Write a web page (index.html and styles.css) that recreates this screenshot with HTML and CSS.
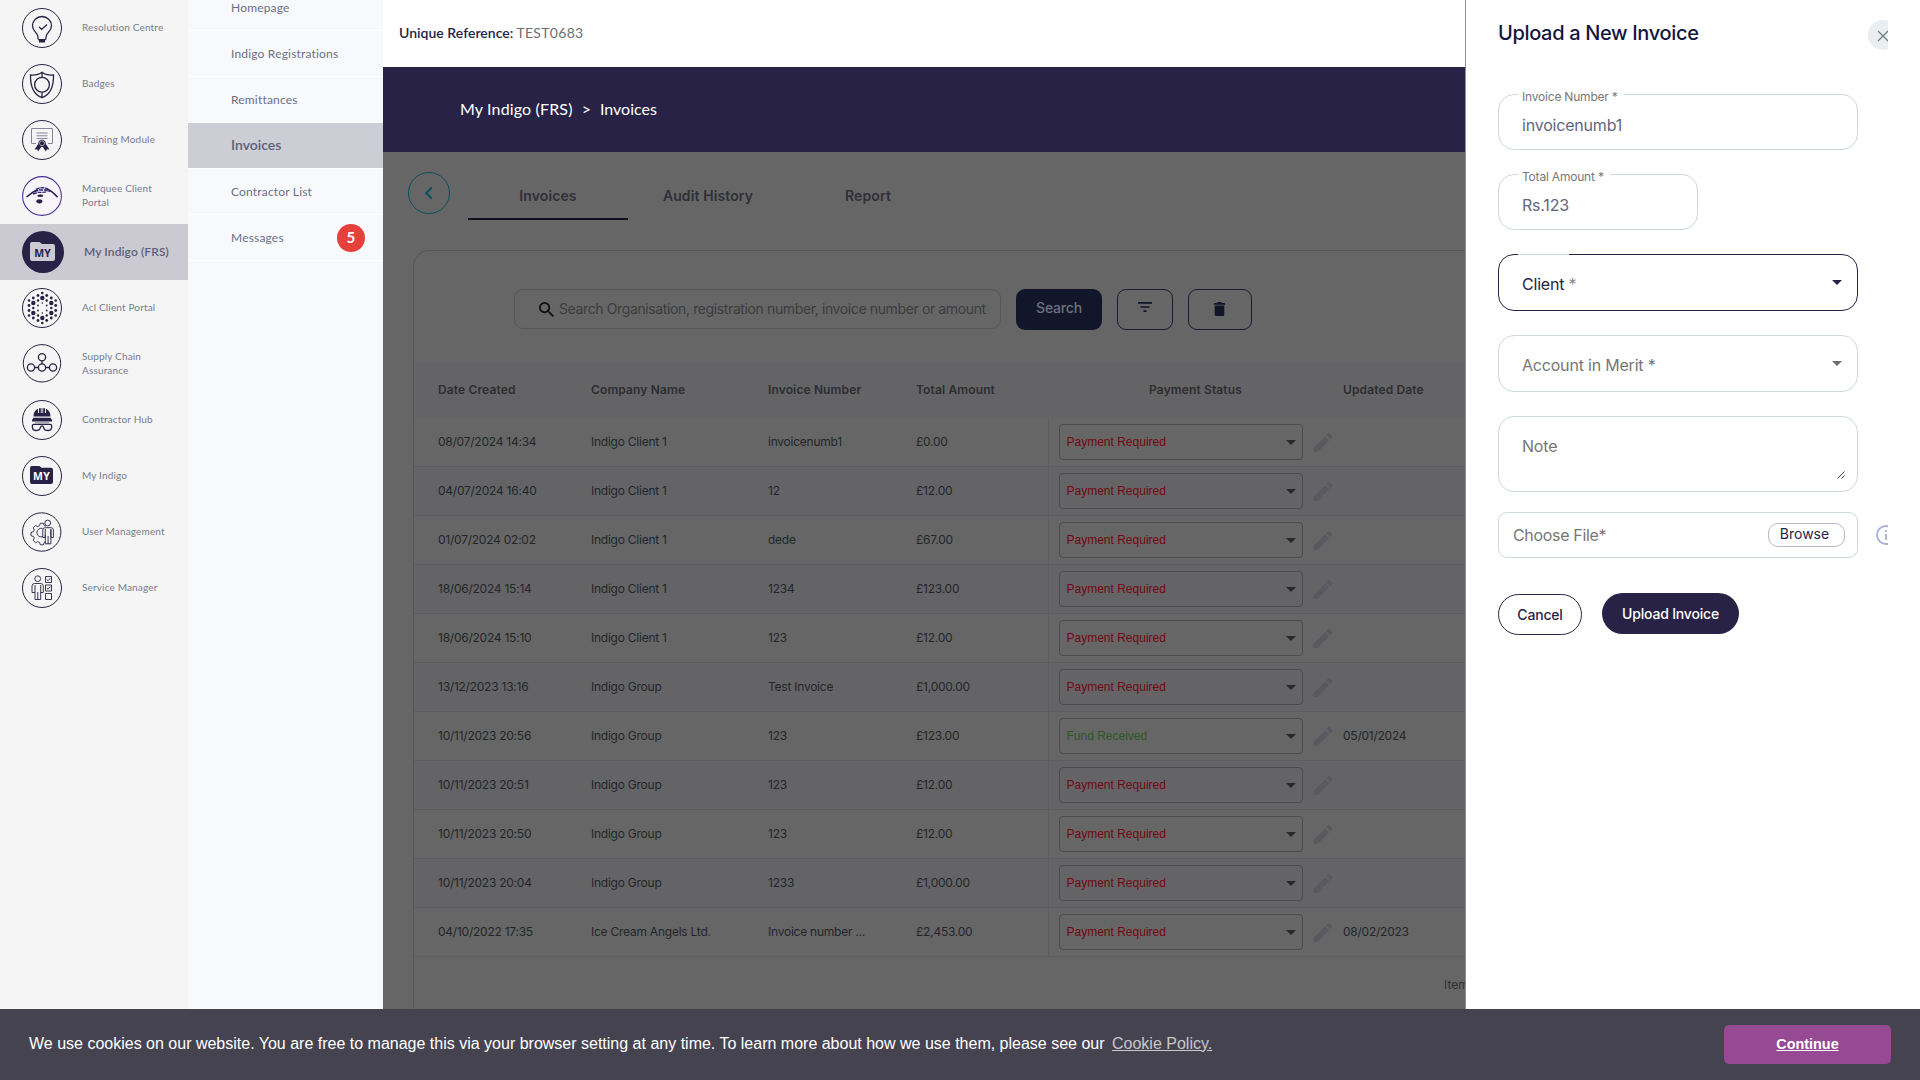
FILE: index.html
```html
<!DOCTYPE html>
<html lang="en">
<head>
<meta charset="utf-8">
<title>Invoices</title>
<link rel="stylesheet" href="styles.css">
</head>
<body>
<div class="app">
  <nav class="modules">
    <a class="module"><svg class="icon" viewBox="0 0 40 40"><circle class="ring" cx="20" cy="20" r="19.5"/><path class="line" d="M16.3 31.500l-.6-3.500C15 24.500 10.500 22.800 10.500 17.700a9.500 9.200 0 0 1 19 0C29.500 22.800 25 24.500 24.300 28l-.6 3.500M17 18.800l2.600 2.600 5.400-4.800"/><path class="solid" d="M16 31h8l-1 2v1.600h-6V33z"/></svg><span>Resolution Centre</span></a>
    <a class="module"><svg class="icon" viewBox="0 0 40 40"><circle class="ring" cx="20" cy="20" r="19.500"/><path class="line" d="M20 8.300c-3 2.400-7 3-11.500 2.700C8.300 22 11 30.500 20 33.700 29 30.500 31.700 22 31.500 11 27 11.300 23 10.700 20 8.300zM20 8v5M20 28.500V34"/><circle class="line" cx="20" cy="20.700" r="7.400"/></svg><span>Badges</span></a>
    <a class="module"><svg class="icon" viewBox="0 0 40 40"><circle class="ring" cx="20" cy="20" r="19.500"/><path class="faint" d="M14 23.500H9.500v-15h21v15H26M14.500 13h11M14.500 15.800h11M14.500 18.500h11"/><path class="solid" d="M16.500 23.500l-4 6 2.700-.2L16 31.500l4-5.500 4 5.500.8-2.200 2.700.2-4-6z"/><circle class="solid" cx="20" cy="23.300" r="3.600"/><circle cx="20" cy="23.300" r="2.500" fill="none" stroke="#f5f5f5" stroke-width=".6"/></svg><span>Training Module</span></a>
    <a class="module"><svg class="icon" viewBox="0 0 40 40"><circle cx="20" cy="20" r="19.400" fill="#f7f5fa" stroke="#4a3295" stroke-width="1.100"/><path d="M4.500 21C9 17.300 12 15.300 15.500 13.500M24.500 12.800c4 1.500 7.300 4.200 11 8.500" fill="none" stroke="#2a2350" stroke-width="1.500"/><path d="M14 13.500l4-1.800h5l3 1.800M12.500 15.700l5-1.700h6l4.500 1.500M11 18l5-1.600h5l4-.6" fill="none" stroke="#352a78" stroke-width="1.400" stroke-dasharray="4 .8"/><ellipse class="solid" cx="18.300" cy="19.700" rx="3" ry="1.300"/><ellipse class="solid" cx="17.400" cy="25.300" rx="3" ry="2.100"/></svg><span>Marquee Client<br>Portal</span></a>
    <a class="module module--active"><svg class="icon" viewBox="0 0 42 42"><circle class="solid" cx="21" cy="21" r="21"/><path d="M10 11h7.500l2.500 2h11q2 0 2 2v13q0 2-2 2H10q-2 0-2-2V13q0-2 2-2z" fill="#cbc9d1"/><text x="20.700" y="25.800" class="my" fill="#282346">MY</text></svg><span>My Indigo (FRS)</span></a>
    <a class="module"><svg class="icon" viewBox="0 0 40 40"><circle class="ring" cx="20" cy="20" r="19.500"/><g class="solid"><circle cx="20.300" cy="10" r="2.200"/><circle cx="29.300" cy="15" r="2.200"/><circle cx="29.300" cy="25" r="2.200"/><circle cx="20.300" cy="30" r="2.200"/><circle cx="11.300" cy="25" r="2.200"/><circle cx="11.300" cy="15" r="2.200"/><circle cx="20.300" cy="5" r="1.300"/><circle cx="20.300" cy="35" r="1.300"/><circle cx="16" cy="7.500" r="1.400"/><circle cx="24.700" cy="7.500" r="1.400"/><circle cx="11.300" cy="10" r="1.400"/><circle cx="29.300" cy="10" r="1.400"/><circle cx="7" cy="12.500" r="1.300"/><circle cx="33.700" cy="12.500" r="1.300"/><circle cx="7" cy="17.500" r="1.400"/><circle cx="33.700" cy="17.500" r="1.400"/><circle cx="7" cy="22.500" r="1.400"/><circle cx="33.700" cy="22.500" r="1.400"/><circle cx="7" cy="27.500" r="1.300"/><circle cx="33.700" cy="27.500" r="1.300"/><circle cx="11.300" cy="30" r="1.400"/><circle cx="29.300" cy="30" r="1.400"/><circle cx="16" cy="32.500" r="1.400"/><circle cx="24.700" cy="32.500" r="1.400"/><circle cx="16" cy="12.500" r="1.200"/><circle cx="24.700" cy="12.500" r="1.200"/><circle cx="16" cy="27.500" r="1.200"/><circle cx="24.700" cy="27.500" r="1.200"/><circle cx="11.300" cy="20" r="1.200"/><circle cx="29.300" cy="20" r="1.200"/><circle cx="16" cy="17.500" r=".9"/><circle cx="24.700" cy="17.500" r=".9"/><circle cx="16" cy="22.500" r=".9"/><circle cx="24.700" cy="22.500" r=".9"/><circle cx="20.300" cy="15" r=".8"/><circle cx="20.300" cy="25" r=".8"/></g></svg><span>Acl Client Portal</span></a>
    <a class="module"><svg class="icon" viewBox="0 0 40 40"><circle class="ring" cx="20" cy="19.300" r="18.700"/><g class="line"><circle cx="20" cy="13.300" r="3.600"/><circle cx="20" cy="23.500" r="3.600"/><circle cx="9" cy="23.500" r="3.600"/><circle cx="31" cy="23.500" r="3.600"/><path d="M20 17v3M12.600 23.500h3.800M23.600 23.500h3.800"/></g></svg><span>Supply Chain<br>Assurance</span></a>
    <a class="module"><svg class="icon" viewBox="0 0 40 40"><circle class="ring" cx="20" cy="20" r="19.500"/><path class="solid" d="M11.500 16.500C11.500 12 14 9.500 16 9v4h1V8.200h1.800V13h.8V8h.8v5h.8V8.200H23V13h1V9c2 .5 4.500 3 4.500 7.500zM11.500 17.700h17l1.500 2.300v1.500H10V20z"/><path class="faint" d="M13 22.800h14"/><path class="line" d="M12 24.300h16c1.500 0 1.800 1 1.600 3.200-.2 2-1.300 3-3 3-3.600 0-4.300-.5-5.200-3.500-.4-1.400-2.400-1.400-2.800 0-.9 3-1.600 3.500-5.200 3.500-1.700 0-2.800-1-3-3-.2-2.200.1-3.200 1.600-3.200z"/></svg><span>Contractor Hub</span></a>
    <a class="module"><svg class="icon" viewBox="0 0 40 40"><circle class="ring" cx="20" cy="20" r="19.500"/><path class="solid" d="M10 10h7.500l2 1.800H29q2 0 2 2V26q0 2-2 2H10q-2 0-2-2V12q0-2 2-2z"/><text x="19.500" y="24" class="my" fill="#fff">MY</text></svg><span>My Indigo</span></a>
    <a class="module"><svg class="icon" viewBox="0 0 40 40"><circle class="ring" cx="19.700" cy="20" r="19.200"/><g class="line thin"><path d="M24 14.200l-1.800-.6-.7-2.300h-3.200l-.8 2.400-1.800.9-2.200-1.100-2.300 2.300 1.100 2.200-.8 1.700-2.500.8v3.200l2.500.8.8 1.700-1.100 2.200 2.300 2.300 2.200-1.100 1.800.8.8 2.400h3.200l.7-2.400 1.300-.6"/><path d="M20.500 16.500a4.300 4.300 0 1 0 .5 8"/><circle cx="25.700" cy="11" r="2.900"/><path d="M23.300 31.800V17M23.300 22.500v3h-2.500V18q0-2.300 2.300-2.300h6q2.300 0 2.300 2.300v7.500h-2.500V17.500M28.900 17v14.800h-5.600M26.100 24v8"/></g></svg><span>User Management</span></a>
    <a class="module"><svg class="icon" viewBox="0 0 40 40"><circle class="ring" cx="20" cy="20" r="19.500"/><g class="line thin"><circle cx="15.700" cy="10.700" r="2.900"/><path d="M13 31.500V17M13 24.500h-3V18q0-2.500 2.500-2.500h6.300q2.500 0 2.500 2.500v6.500h-2.600M18.700 17v14.500H13M15.800 24v7.500"/><path d="M23.500 8.500h6v6h-6zM23.500 17h6v6h-6zM23.500 25.500h6v6h-6zM24.800 11.500l1.300 1.200 2.300-2.500M24.800 20l1.300 1.200 2.300-2.500"/></g></svg><span>Service Manager</span></a>
  </nav>
  <nav class="submenu">
    <a class="sub">Homepage</a>
    <a class="sub">Indigo Registrations</a>
    <a class="sub">Remittances</a>
    <a class="sub sub--active">Invoices</a>
    <a class="sub">Contractor List</a>
    <a class="sub">Messages<span class="count">5</span></a>
  </nav>
  <main class="main">
    <div class="reference"><b>Unique Reference:</b><span>TEST0683</span></div>
    <div class="crumbs"><span>My Indigo (FRS)</span><span class="sep">&gt;</span><span class="here">Invoices</span></div>
    <div class="content">
      <div class="tabs">
        <button class="back"><svg viewBox="0 0 12 14"><path d="M8.800 1.500L3.200 7l5.600 5.500"/></svg></button>
        <a class="tab tab--active">Invoices</a><a class="tab">Audit History</a><a class="tab">Report</a>
      </div>
      <section class="card">
        <div class="search">
          <div class="search-box"><svg viewBox="3 3 17.500 17.500"><path d="M15.500 14h-.79l-.28-.27A6.471 6.471 0 0 0 16 9.500 6.500 6.500 0 1 0 9.500 16c1.610 0 3.090-.59 4.230-1.570l.27.28v.79l5 4.990L20.490 19l-4.990-5zm-6 0C7.010 14 5 11.990 5 9.500S7.010 5 9.500 5 14 7.010 14 9.500 11.990 14 9.500 14z"/></svg><span>Search Organisation, registration number, invoice number or amount</span></div>
          <button class="go">Search</button>
          <button class="tool tool--filter"><svg width="14" height="10" viewBox="0 0 14 10"><path d="M0 0h14v1.700H0zM2.500 4.200h9v1.600h-9zM5.500 8.300h3V10h-3z"/></svg></button>
          <button class="tool tool--trash"><svg width="11" height="14" viewBox="0 0 11 14"><path d="M.7 3.600h9.600V12.500q0 1.500-1.500 1.500H2.200Q.7 14 .7 12.500zM0 1h3l.8-1h3.400L8 1h3v1.700H0z"/></svg></button>
        </div>
        <div class="row row--head"><span>Date Created</span><span>Company Name</span><span>Invoice Number</span><span>Total Amount</span><span class="center">Payment Status</span><span>Updated Date</span></div>
        <div id="rows"></div>
        <div class="pager">Items per page:</div>
      </section>
    </div>
  </main>
  <aside class="drawer">
    <header class="drawer-head"><h2>Upload a New Invoice</h2><button class="close"><svg viewBox="0 0 10 10"><path d="M0 0l10 10M10 0L0 10"/></svg></button></header>
    <div class="field"><label class="float">Invoice Number *</label><span class="value">invoicenumb1</span></div>
    <div class="field field--short"><label class="float">Total Amount *</label><span class="value">Rs.123</span></div>
    <div class="field field--focus"><i class="notch"></i><span>Client <em>*</em></span><i class="arrow"></i></div>
    <div class="field field--select"><span>Account in Merit *</span><i class="arrow"></i></div>
    <div class="field field--note"><span>Note</span><svg class="grip" viewBox="0 0 8 8"><path d="M.5 7.500l7-7M4.500 7.500l3-3"/></svg></div>
    <div class="file-row">
      <div class="file"><span>Choose File*</span><button class="browse">Browse</button></div>
      <svg class="info" viewBox="0 0 20 20"><circle cx="10" cy="10" r="9"/><path d="M10 9v6M10 5v2"/></svg>
    </div>
    <div class="actions"><button class="cancel">Cancel</button><button class="upload">Upload Invoice</button></div>
  </aside>
</div>
<footer class="cookies"><p>We use cookies on our website. You are free to manage this via your browser setting at any time. To learn more about how we use them, please see our <a>Cookie Policy.</a></p><button class="continue">Continue</button></footer>
<script src="rows.js"></script>
</body>
</html>
```
FILE: styles.css
```css
* { box-sizing: border-box; }
body { margin: 0; width: 1920px; height: 1080px; overflow: hidden; background: #fff; font-family: "Inter", sans-serif; }
button { font: inherit; padding: 0; background: none; border: 0; }
.app { display: flex; height: 1009px; overflow: hidden; }

.modules { width: 188px; flex: none; background: #f5f5f5; font: 10px/14px "Lato", sans-serif; letter-spacing: .16px; color: #777b90; }
.module { display: flex; align-items: center; gap: 20px; height: 56px; padding-left: 22px; }
.module span { padding-bottom: 2px; }
.icon { width: 40px; height: 40px; flex: none; }
.module--active { background: #cbc9d1; font-size: 12px; font-weight: 600; color: #5d5f78; letter-spacing: .1px; }
.module--active span { padding-bottom: 0; }
.module--active .icon { width: 42px; height: 42px; }
.ring { fill: none; stroke: #282346; stroke-width: 1; }
.line { fill: none; stroke: #282346; stroke-width: 1.3; }
.thin { stroke-width: .9; }
.faint { fill: none; stroke: #86839b; stroke-width: 1; }
.solid { fill: #282346; }
.my { font: 700 10.500px "Open Sans", sans-serif; text-anchor: middle; }

.submenu { width: 195px; flex: none; background: #f8f9fc; font: 12px/16px "Lato", sans-serif; letter-spacing: .18px; color: #6b6f86; }
.sub { display: flex; align-items: center; height: 46px; padding-left: 43px; border-bottom: 1px solid #fff; }
.sub:first-child { margin-top: -15px; }
.sub--active { background: #cdcdd6; padding-bottom: 2px; font-size: 14px; font-weight: 600; letter-spacing: 0; color: #5d5f78; }
.count { width: 28px; height: 28px; margin: 0 18px 0 auto; border-radius: 50%; background: #e5403c; color: #fff; font: 700 15px/26px "Lato", sans-serif; text-align: center; }

.main { width: 1082px; flex: none; overflow: hidden; }
.reference { display: flex; gap: 3px; height: 67px; padding-left: 16px; font: 14px/66px "Lato", sans-serif; color: #6d6d72; letter-spacing: .3px; }
.reference b { font-weight: 600; color: #282346; letter-spacing: .03px; }
.crumbs { display: flex; height: 85px; padding-left: 77px; background: #282346; color: #fff; font: 16px/84px "Lato", sans-serif; }
.crumbs span:first-child { letter-spacing: .15px; }
.sep { margin: 0 9px; }
.content { height: 857px; background: #666; }

.tabs { display: flex; height: 68px; padding-left: 25px; }
.back { width: 42px; height: 42px; margin: 20px 18px 0 0; border: 1px solid #08515c; border-radius: 50%; display: grid; place-items: center; }
.back svg { width: 12px; height: 14px; fill: none; stroke: #08515c; stroke-width: 2; }
.tab { width: 160px; height: 68px; padding-top: 1px; font-size: 14px; font-weight: 600; line-height: 86px; text-align: center; letter-spacing: .11px; color: #302f38; }
.tab--active { border-bottom: 2px solid #100e1f; }

.card { width: 1400px; height: 900px; margin: 30px 0 0 30px; border: 1px solid #555759; border-radius: 16px; }
.search { display: flex; height: 111px; padding: 38px 0 0 100px; align-items: flex-start; }
.search-box { display: flex; align-items: center; width: 487px; height: 40px; padding: 0 9px 0 24px; gap: 5px; border: 1px solid #555759; border-radius: 9px; color: #3c3c3e; font-size: 14px; letter-spacing: -.38px; white-space: nowrap; }
.search-box svg { width: 15px; height: 15px; flex: none; fill: #0d0d10; }
.search-box span { width: 432px; flex: none; overflow: hidden; line-height: 22px; }
.go { width: 86px; height: 41px; margin-left: 15px; border-radius: 9px; background: #12162a; color: #6f727c; font-size: 14px; font-weight: 500; letter-spacing: -.2px; line-height: 37px; padding-bottom: 4px; }
.tool { display: grid; place-items: center; height: 41px; border: 1px solid #1b1933; border-radius: 9px; padding-bottom: 6px; }
.tool svg { fill: #12152a; }
.tool--filter { width: 56px; margin-left: 15px; }
.tool--trash { width: 64px; margin-left: 15px; padding: 0 2px 1px 0; }

.row { display: grid; grid-template-columns: 153px 177px 148px 132px 295px 150px; height: 49px; padding-left: 24px; align-items: center; border-bottom: 1px solid #5c5d5f; font-size: 12px; letter-spacing: -.24px; color: #232629; }
.row > span { padding-bottom: 2px; }
.row:nth-child(even) { background: #646467; }
.row--head { height: 56px; background: #606062; border: 0; font-weight: 600; letter-spacing: .13px; color: #2d2d2f; }
.center { text-align: center; }
.status { display: flex; align-items: center; gap: 10px; height: 48px; padding-left: 10px; border-left: 1px solid #5c5d5f; }
.select { display: flex; align-items: center; justify-content: space-between; width: 244px; height: 36px; padding: 0 6px 0 6.5px; border: 1px solid #4b4c4d; border-radius: 4px; font: 12px "Liberation Sans", sans-serif; letter-spacing: 0; color: #730812; }
.select--received { color: #2d5720; }
.arrow { width: 0; height: 0; border: 5px solid transparent; border-top-color: #27282a; border-bottom: 0; }
.pencil { width: 20px; height: 20px; fill: #59595f; }
.pager { padding: 20px 0 0 1030px; font-size: 12px; line-height: 16px; color: #303033; white-space: nowrap; }

.drawer { flex: none; width: 423px; padding-left: 32px; border-left: 1px solid #87939b; background: #fff; overflow: hidden; color: #777; font-size: 16px; letter-spacing: -.2px; }
.drawer-head { display: flex; justify-content: space-between; height: 94px; width: 400px; }
h2 { margin: 0; font-size: 20px; font-weight: 500; line-height: 67px; letter-spacing: -.34px; color: #14163f; }
.close { width: 30px; height: 30px; margin-top: 20px; border-radius: 50%; background: #eaeef0; display: grid; place-items: center; }
.close svg { width: 10px; height: 10px; margin-top: 2px; stroke: #6f7f88; stroke-width: 1.300; overflow: visible; }
.field { position: relative; display: flex; align-items: center; justify-content: space-between; width: 360px; height: 56px; margin-bottom: 24px; padding: 3px 15px 0 23px; border: 1px solid #cfd8dc; border-radius: 16px; line-height: 22px; }
.field em { font-style: normal; color: #888; }
.value { padding-top: 3px; color: #62667c; }
.field--short { width: 200px; }
.float { position: absolute; left: 19px; top: -7px; padding: 0 6px 0 4px; background: #fff; font-size: 12px; line-height: 17px; }
.field--focus { height: 57px; border-color: #282346; color: #282346; }
.notch { position: absolute; left: 19px; top: -1px; width: 51px; height: 1px; background: #cfd8dc; }
.field .arrow { margin-top: -4px; border-top-color: #6d6d70; }
.field--focus .arrow { border-top-color: #282346; }
.field--select { height: 57px; }
.field--note { height: 76px; margin-bottom: 20px; padding: 18px 12px 12px 23px; align-items: flex-start; }
.grip { align-self: flex-end; width: 8px; height: 8px; fill: none; stroke: #444; stroke-width: 1; }
.file-row { display: flex; align-items: center; gap: 18px; width: 398px; }
.file { display: flex; align-items: center; justify-content: space-between; width: 360px; height: 46px; padding: 0 12px 0 14px; border: 1px solid #cfd8dc; border-radius: 9px; letter-spacing: -.33px; }
.browse { width: 77px; height: 24px; border: 1px solid #b9b9c9; border-radius: 10px; color: #282346; font-size: 14px; line-height: 20px; padding: 0 4px 2px 0; }
.info { width: 20px; height: 20px; flex: none; fill: none; stroke: #a9aed6; stroke-width: 1.800; }
.actions { display: flex; gap: 20px; margin-top: 35px; }
.actions button { height: 41px; border-radius: 21px; font-size: 14px; font-weight: 500; letter-spacing: -.18px; }
.cancel { width: 84px; margin-top: 1px; padding-bottom: 1px; border: 1px solid #282346; color: #282346; }
.upload { width: 137px; background: #282346; color: #fff; }

.cookies { position: relative; display: flex; align-items: center; justify-content: space-between; height: 71px; padding: 0 29px; background: #464351; color: #fff; font: 16px/24px "Liberation Sans", sans-serif; }
.cookies p { margin: 0; padding-bottom: 2px; }
.cookies a { margin-left: 3px; color: #c8c7cb; text-decoration: underline; }
.continue { width: 167px; height: 39px; padding-bottom: 1px; border-radius: 5px; background: #964a93; color: #fff; font-size: 14.400px; font-weight: 700; text-decoration: underline; }
```
FILE: rows.js
```js
const invoices = [
  ["08/07/2024 14:34", "Indigo Client 1", "invoicenumb1", "£0.00"],
  ["04/07/2024 16:40", "Indigo Client 1", "12", "£12.00"],
  ["01/07/2024 02:02", "Indigo Client 1", "dede", "£67.00"],
  ["18/06/2024 15:14", "Indigo Client 1", "1234", "£123.00"],
  ["18/06/2024 15:10", "Indigo Client 1", "123", "£12.00"],
  ["13/12/2023 13:16", "Indigo Group", "Test Invoice", "£1,000.00"],
  ["10/11/2023 20:56", "Indigo Group", "123", "£123.00", "05/01/2024", true],
  ["10/11/2023 20:51", "Indigo Group", "123", "£12.00"],
  ["10/11/2023 20:50", "Indigo Group", "123", "£12.00"],
  ["10/11/2023 20:04", "Indigo Group", "1233", "£1,000.00"],
  ["04/10/2022 17:35", "Ice Cream Angels Ltd.", "Invoice number ...", "£2,453.00", "08/02/2023"]
];
document.getElementById("rows").innerHTML = invoices.map(([date, company, number, amount, updated = "", received]) => `
  <div class="row"><span>${date}</span><span>${company}</span><span>${number}</span><span>${amount}</span>
    <div class="status"><div class="select${received ? " select--received" : ""}">${received ? "Fund Received" : "Payment Required"}<i class="arrow"></i></div>
      <svg class="pencil" viewBox="2.500 2 19 19"><path d="M3 17.250V21h3.750L17.810 9.940l-3.750-3.750L3 17.250zM20.710 7.040a1 1 0 0 0 0-1.410l-2.340-2.340a1 1 0 0 0-1.410 0l-1.830 1.830 3.750 3.750 1.830-1.830z"/></svg></div>
    <span>${updated}</span></div>`).join("");
```
